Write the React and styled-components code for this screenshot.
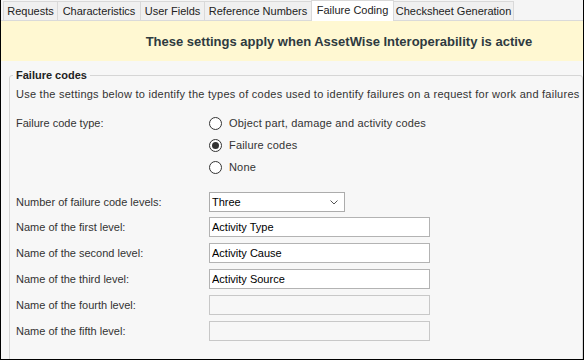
import React from "react";
import styled, { createGlobalStyle } from "styled-components";

const GlobalStyle = createGlobalStyle`
  html, body { margin: 0; padding: 0; background: #ffffff; }
  body { font-family: "Liberation Sans", Arial, sans-serif; }
  *, *::before, *::after { box-sizing: border-box; }
`;

const Frame = styled.div`
  width: 584px;
  height: 360px;
  border: 1px solid #000;
  border-top: none;
  background: #f7f7f7;
  overflow: hidden;
  display: flex;
  flex-direction: column;
  font-size: 11px;
  color: #333;
`;

const TabBar = styled.div`
  flex: none;
  height: 21px;
  display: flex;
  align-items: flex-end;
  padding-left: 2px;
  background: #f5f5f5;
  border-bottom: 1px solid #dadada;
`;

const Tab = styled.div`
  position: relative;
  z-index: ${(p) => (p.$active ? 1 : 0)};
  flex: none;
  width: ${(p) => p.$width}px;
  height: ${(p) => (p.$active ? 21 : 19)}px;
  margin-bottom: ${(p) => (p.$active ? -1 : 0)}px;
  margin-left: -1px;
  padding-bottom: ${(p) => (p.$active ? 3 : 0)}px;
  display: flex;
  align-items: center;
  justify-content: center;
  border: 1px solid #d9d9d9;
  border-bottom: none;
  background: ${(p) => (p.$active ? "#ffffff" : "#f0f0f0")};
  color: #222;
  white-space: nowrap;
  &:first-child { margin-left: 0; }
`;

const Banner = styled.div`
  flex: none;
  height: 40px;
  display: flex;
  align-items: center;
  justify-content: center;
  padding-left: 94px;
  background: #fff8d2;
  color: #2e3a40;
  font-weight: bold;
  font-size: 13px;
  white-space: nowrap;
`;

const Body = styled.div`
  flex: 1;
  padding: 8px 2px 0 8px;
`;

const GroupBox = styled.fieldset`
  margin: 0;
  min-height: 320px;
  padding: 6px 2px 20px 6px;
  border: 1px solid #d6d6d6;
  border-radius: 3px;
`;

const Legend = styled.legend`
  margin-left: -3px;
  padding: 0 3px;
  font-weight: bold;
  font-size: 11px;
  line-height: 13px;
  color: #222;
`;

const Description = styled.div`
  line-height: 13px;
  letter-spacing: 0.25px;
  white-space: nowrap;
  margin-bottom: 11px;
`;

const Row = styled.div`
  display: grid;
  grid-template-columns: 193px 1fr;
  align-items: ${(p) => (p.$top ? "start" : "center")};
  height: ${(p) => (p.$top ? "auto" : "20px")};
  margin-bottom: ${(p) => (p.$tight ? -1 : 0)}px;
`;

const Label = styled.div`
  line-height: ${(p) => (p.$tall ? 22 : 13)}px;
  white-space: nowrap;
`;

const RadioList = styled.div`
  display: flex;
  flex-direction: column;
`;

const RadioOption = styled.div`
  height: 22px;
  display: flex;
  align-items: center;
  gap: 7px;
  letter-spacing: 0.18px;
  white-space: nowrap;
`;

const RadioCircle = styled.span`
  flex: none;
  width: 13px;
  height: 13px;
  border-radius: 50%;
  border: 1px solid #333;
  background: #fff;
  display: flex;
  align-items: center;
  justify-content: center;
  &::after {
    content: "";
    width: 7px;
    height: 7px;
    border-radius: 50%;
    background: ${(p) => (p.$checked ? "#333" : "transparent")};
  }
`;

const Fields = styled.div`
  margin-top: 14px;
  display: flex;
  flex-direction: column;
  gap: 6px;
`;

const Combo = styled.div`
  width: 136px;
  height: 20px;
  border: 1px solid #acacac;
  background: #fff;
  display: flex;
  align-items: center;
  justify-content: space-between;
  padding: 0 6px 0 2px;
  color: #000;
`;

const TextField = styled.input`
  width: 221px;
  height: 20px;
  margin: 0;
  padding: 0 2px;
  border: 1px solid ${(p) => (p.disabled ? "#c8c8c8" : "#b3b3b3")};
  background: ${(p) => (p.disabled ? "#f7f7f7" : "#ffffff")};
  font-family: "Liberation Sans", Arial, sans-serif;
  font-size: 11px;
  color: #000;
  outline: none;
`;

const Chevron = () => (
  <svg width="8" height="5" viewBox="0 0 8 5">
    <polyline points="0.5,0.5 4,4 7.5,0.5" fill="none" stroke="#555" strokeWidth="1" />
  </svg>
);

const tabs = [
  { label: "Requests", width: 55 },
  { label: "Characteristics", width: 84 },
  { label: "User Fields", width: 65 },
  { label: "Reference Numbers", width: 108 },
  { label: "Failure Coding", width: 83, active: true },
  { label: "Checksheet Generation", width: 121 },
];

const radios = [
  { label: "Object part, damage and activity codes", checked: false },
  { label: "Failure codes", checked: true },
  { label: "None", checked: false },
];

const levels = [
  { label: "Name of the first level:", value: "Activity Type" },
  { label: "Name of the second level:", value: "Activity Cause" },
  { label: "Name of the third level:", value: "Activity Source" },
  { label: "Name of the fourth level:", value: "", disabled: true },
  { label: "Name of the fifth level:", value: "", disabled: true },
];

export default function App() {
  return (
    <>
      <GlobalStyle />
      <Frame>
        <TabBar>
          {tabs.map((t) => (
            <Tab key={t.label} $active={t.active} $width={t.width}>
              {t.label}
            </Tab>
          ))}
        </TabBar>
        <Banner>These settings apply when AssetWise Interoperability is active</Banner>
        <Body>
          <GroupBox>
            <Legend>Failure codes</Legend>
            <Description>
              Use the settings below to identify the types of codes used to identify failures on a request for work and failures
            </Description>
            <Row $top>
              <Label $tall>Failure code type:</Label>
              <RadioList>
                {radios.map((r) => (
                  <RadioOption key={r.label}>
                    <RadioCircle $checked={r.checked} />
                    {r.label}
                  </RadioOption>
                ))}
              </RadioList>
            </Row>
            <Fields>
              <Row $tight>
                <Label>Number of failure code levels:</Label>
                <Combo>
                  Three
                  <Chevron />
                </Combo>
              </Row>
              {levels.map((l) => (
                <Row key={l.label}>
                  <Label>{l.label}</Label>
                  <TextField readOnly defaultValue={l.value} disabled={l.disabled} />
                </Row>
              ))}
            </Fields>
          </GroupBox>
        </Body>
      </Frame>
    </>
  );
}
